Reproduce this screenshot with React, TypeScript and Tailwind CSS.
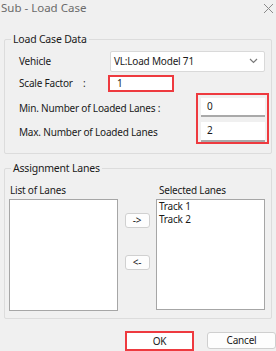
import React from "react";

function Group({ label, className, children }: { label: string; className?: string; children: React.ReactNode }) {
  return (
    <div className={"relative mx-[4px] border border-[#dcdcdc] rounded-[2px] " + (className ?? "")}>
      <span className="absolute left-[6px] top-[-8px] bg-[#f0f0f0] px-[2px] text-[10.5px] leading-[14px] tracking-[-0.2px] text-[#1a1a1a]">
        {label}
      </span>
      {children}
    </div>
  );
}

export default function App() {
  return (
    <div
      className="w-[276px] h-[351px] bg-[#f0f0f0] overflow-hidden flex flex-col text-[#1a1a1a]"
      style={{ fontFamily: '"Noto Sans", "Open Sans", sans-serif' }}
    >
      {/* title bar */}
      <div className="h-[17px] flex items-center justify-between pl-[1px] pr-[2px]">
        <span className="text-[11.5px] leading-[16px] text-[#6b6b6b]">Sub - Load Case</span>
        <svg width="11" height="11" viewBox="0 0 11 11" className="mt-[1px]">
          <path d="M1 1 L10 10 M10 1 L1 10" stroke="#8a8a8a" strokeWidth="1" />
        </svg>
      </div>

      <Group label="Load Case Data" className="mt-[22px] h-[115px]">
        <div className="flex flex-col text-[10px] tracking-[-0.2px]">
          {/* Vehicle */}
          <div className="mt-[11px] h-[21px] flex items-center">
            <span className="w-[105px] pl-[14px]">Vehicle</span>
            <div className="w-[155px] h-[21px] bg-white border border-[#d9d9d9] rounded-[2px] flex items-center justify-between pl-[3px] pr-[6px]">
              <span>VL:Load Model 71</span>
              <svg width="9" height="6" viewBox="0 0 9 6">
                <path d="M1 1 L4.5 4.5 L8 1" stroke="#7a7a7a" strokeWidth="1.2" fill="none" />
              </svg>
            </div>
          </div>
          {/* Scale Factor */}
          <div className="mt-[4px] h-[16px] flex items-center">
            <span className="w-[78px] pl-[14px] whitespace-nowrap">Scale Factor</span>
            <span className="w-[25px]">:</span>
            <div className="w-[66px] h-[17px] bg-white border-2 border-[#ee3a3f] flex items-center pl-[7px]">
              1
            </div>
          </div>
          {/* Min / Max */}
          <div className="mt-[1px] flex">
            <div className="w-[191px] pl-[14px] flex flex-col">
              <span className="mt-[7px] h-[16px] leading-[16px] whitespace-nowrap">Min. Number of Loaded Lanes :</span>
              <span className="mt-[8px] h-[16px] leading-[16px] whitespace-nowrap">Max. Number of Loaded Lanes</span>
            </div>
            <div className="w-[73px] h-[51px] border-2 border-[#ee3a3f] flex flex-col pl-[3px] pr-[2px] pt-[3px] gap-[5px]">
              <div className="h-[19px] bg-white border-b-2 border-[#a9a9a9] flex items-center pl-[6px]">0</div>
              <div className="h-[20px] bg-white border-b-2 border-[#a9a9a9] flex items-center pl-[6px]">2</div>
            </div>
          </div>
        </div>
      </Group>

      <Group label="Assignment Lanes" className="mt-[14px] h-[152px]">
        <div className="flex pl-[4px] pr-[6px] pt-[13px] text-[10px] tracking-[-0.2px]">
          <div className="flex flex-col">
            <span className="h-[16px] leading-[16px] pl-[1px]">List of Lanes</span>
            <div className="mt-[1px] w-[109px] h-[112px] bg-white border border-[#a6a6a6]" />
          </div>
          <div className="flex flex-col items-center w-[38px] pt-[31px]">
            <div className="w-[25px] h-[15px] bg-[#fdfdfd] border border-[#d0d0d0] rounded-[3px] flex items-center justify-center text-[10px] leading-[10px]">
              -&gt;
            </div>
            <div className="mt-[27px] w-[25px] h-[15px] bg-[#fdfdfd] border border-[#d0d0d0] rounded-[3px] flex items-center justify-center text-[10px] leading-[10px]">
              &lt;-
            </div>
          </div>
          <div className="flex flex-col">
            <span className="h-[16px] leading-[16px] pl-[3px]">Selected Lanes</span>
            <div className="mt-[1px] w-[109px] h-[111px] bg-white border border-[#a6a6a6] flex flex-col pl-[2px] leading-[13.6px]">
              <span>Track 1</span>
              <span>Track 2</span>
            </div>
          </div>
        </div>
      </Group>

      <div className="mt-[12px] flex pl-[125px] text-[10px] tracking-[-0.2px]">
        <div className="w-[69px] h-[20px] border-2 border-[#ee3a3f] bg-white flex items-center justify-center">
          OK
        </div>
        <div className="ml-[13px] w-[69px] h-[17px] mt-[1px] border border-[#cfcfcf] rounded-[3px] bg-[#fdfdfd] flex items-center justify-center">
          Cancel
        </div>
      </div>
    </div>
  );
}
